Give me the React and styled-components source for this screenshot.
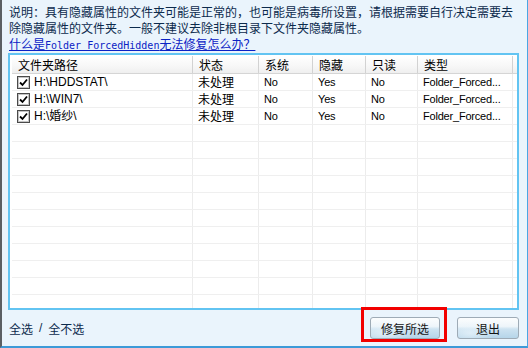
import React from "react"
import styled, { createGlobalStyle } from "styled-components"

const GlobalStyle = createGlobalStyle`
  html, body {
    margin: 0;
    padding: 0;
    background: #eaf4fc;
  }
  body {
    font-family: "Noto Sans CJK SC", "Liberation Sans", sans-serif;
    font-size: 12px;
  }
`

const Window = styled.div`
  width: 528px;
  height: 348px;
  box-sizing: border-box;
  background: #eaf4fc;
  border-left: 2px solid #5b5f63;
  border-right: 1px solid #4aa6e4;
  border-bottom: 2px solid #3d9ad8;
  display: flex;
  flex-direction: column;
  overflow: hidden;
`

const Notice = styled.div`
  height: 53px;
  box-sizing: border-box;
  padding: 4px 0 0 7px;
  color: #0c2a4c;
  line-height: 16px;
`

const NoticeText = styled.div`
  width: 506px;
`

const Help = styled.a`
  display: inline-block;
  color: #0b22c4;
  text-decoration: underline;
  cursor: pointer;
`

const Mono = styled.span`
  font-family: "DejaVu Sans Mono", "Liberation Mono", monospace;
  font-size: 10px;
`

const ListFrame = styled.div`
  margin-left: 6px;
  width: 511px;
  height: 257px;
  box-sizing: border-box;
  border: 2px solid #62c4f2;
  background: #fff;
  padding: 1px 0 0 2px;
  overflow: hidden;
`

const columns = "181px 66px 54px 53px 52px 95px 3px"

const HeaderRow = styled.div`
  display: grid;
  grid-template-columns: ${columns};
  height: 18px;
  box-sizing: border-box;
  border-bottom: 1px solid #d5d5d5;
  background: linear-gradient(to bottom, #ffffff 0%, #f7f7f7 60%, #efefef 100%);
`

const HeaderCell = styled.div`
  box-sizing: border-box;
  padding-left: 6px;
  border-right: ${p => (p.$last ? "none" : "1px solid #d2d2d2")};
  line-height: 17px;
  color: #000;
  white-space: nowrap;
  overflow: hidden;
`

const Row = styled.div`
  display: grid;
  grid-template-columns: ${columns};
  height: 17px;
  box-sizing: border-box;
  border-bottom: 1px solid #efefef;
`

const Cell = styled.div`
  box-sizing: border-box;
  padding-left: 5px;
  border-right: ${p => (p.$last ? "none" : "1px solid #ececec")};
  font-family: "Liberation Sans", "Noto Sans CJK SC", sans-serif;
  font-size: ${p => (p.$first ? "12px" : "11px")};
  letter-spacing: ${p => (p.$first ? "0" : "-0.2px")};
  line-height: 16px;
  color: #000;
  white-space: nowrap;
  overflow: hidden;
  display: flex;
  align-items: center;
  gap: 4px;
`

const Cjk = styled.span`
  font-family: "Noto Sans CJK SC", sans-serif;
  font-size: 12px;
  letter-spacing: 0;
`

const Check = styled.span`
  width: 13px;
  height: 13px;
  box-sizing: border-box;
  border: 1px solid #4a4a4a;
  box-shadow: inset 0 0 0 1px #c4c4c4;
  background: #fff;
  display: inline-flex;
  align-items: center;
  justify-content: center;
  flex: none;
`

const Footer = styled.div`
  flex: 1;
  display: flex;
  align-items: center;
  padding: 0 8px 0 7px;
  color: #0c2a4c;
`

const SelectLink = styled.span`
  cursor: pointer;
`

const Sep = styled.span`
  font-family: "Liberation Sans", sans-serif;
  margin: 0 6px;
`

const Spacer = styled.div`
  flex: 1;
`

const Highlight = styled.span`
  position: relative;
  display: inline-flex;
  &::after {
    content: "";
    position: absolute;
    left: -9px;
    top: -10px;
    right: -7px;
    bottom: -3px;
    border: 3px solid #f20000;
    pointer-events: none;
  }
`

const Button = styled.button`
  width: ${p => p.$w}px;
  height: 22px;
  margin-left: ${p => p.$gap || 0}px;
  padding: 0;
  box-sizing: border-box;
  border: 1px solid #9eabb6;
  border-radius: 3px;
  background:
    radial-gradient(ellipse 40% 60% at 20% 75%, rgba(235, 245, 252, 0.7), rgba(235, 245, 252, 0) 100%),
    linear-gradient(to bottom, #fbfdfe 0%, #eef5fa 42%, #cde3f1 55%, #b6d5e9 100%);
  font-family: "Noto Sans CJK SC", sans-serif;
  font-size: 12px;
  color: #141414;
  cursor: pointer;
`

const CheckMark = () => (
  <svg width="9" height="9" viewBox="0 0 9 9">
    <path d="M1 4.5 L3.5 7 L8 1.5" fill="none" stroke="#000" strokeWidth="1.8" />
  </svg>
)

const items = [
  { path: "H:\\HDDSTAT\\", state: "未处理", sys: "No", hidden: "Yes", ro: "No", type: "Folder_Forced..." },
  { path: "H:\\WIN7\\", state: "未处理", sys: "No", hidden: "Yes", ro: "No", type: "Folder_Forced..." },
  { path: "H:\\婚纱\\", state: "未处理", sys: "No", hidden: "Yes", ro: "No", type: "Folder_Forced..." },
]

const headers = ["文件夹路径", "状态", "系统", "隐藏", "只读", "类型"]

export default function App() {
  const blanks = Array.from({ length: 12 })

  return (
    <>
      <GlobalStyle />
      <Window>
        <Notice>
          <NoticeText>
            说明：具有隐藏属性的文件夹可能是正常的，也可能是病毒所设置，请根据需要自行决定需要去除隐藏属性的文件夹。一般不建议去除非根目录下文件夹隐藏属性。
          </NoticeText>
          <Help>
            什么是<Mono>Folder ForcedHidden</Mono>无法修复怎么办？
          </Help>
        </Notice>

        <ListFrame>
          <HeaderRow>
            {headers.map(h => (
              <HeaderCell key={h}>{h}</HeaderCell>
            ))}
            <HeaderCell $last />
          </HeaderRow>
          {items.map(item => (
            <Row key={item.path}>
              <Cell $first>
                <Check>
                  <CheckMark />
                </Check>
                {item.path}
              </Cell>
              <Cell>
                <Cjk>{item.state}</Cjk>
              </Cell>
              <Cell>{item.sys}</Cell>
              <Cell>{item.hidden}</Cell>
              <Cell>{item.ro}</Cell>
              <Cell>{item.type}</Cell>
              <Cell $last />
            </Row>
          ))}
          {blanks.map((_, i) => (
            <Row key={i}>
              <Cell />
              <Cell />
              <Cell />
              <Cell />
              <Cell />
              <Cell />
              <Cell $last />
            </Row>
          ))}
        </ListFrame>

        <Footer>
          <SelectLink>全选</SelectLink>
          <Sep>/</Sep>
          <SelectLink>全不选</SelectLink>
          <Spacer />
          <Highlight>
            <Button $w={70}>修复所选</Button>
          </Highlight>
          <Button $w={62} $gap={17}>
            退出
          </Button>
        </Footer>
      </Window>
    </>
  )
}
